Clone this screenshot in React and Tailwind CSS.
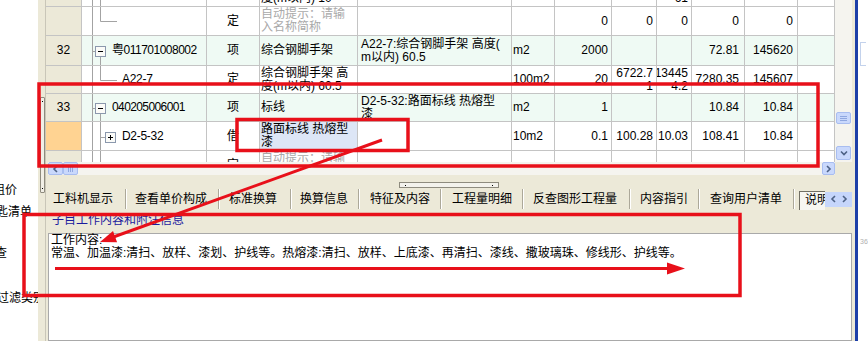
import React from 'react';

const GRID = 'grid grid-cols-[36px_125px_53px_98px_154px_43px_57px_45px_35px_53px_53px_37px]';

function C({ children, className = '' }) {
  return (
    <div className={`flex items-center overflow-hidden border-r border-b border-[#c4c4c4] ${className}`}>
      {children}
    </div>
  );
}

function Hdr({ children, className = 'bg-[#ece9d8]' }) {
  return <C className={`justify-center ${className}`}>{children}</C>;
}

function N({ children, className = 'pr-[4px]' }) {
  return (
    <C className={`justify-end text-right ${className}`}>
      <div>{children}</div>
    </C>
  );
}

function Tree({ w, h, d, box, plus }) {
  return (
    <svg width={w} height={h} className="shrink-0 self-start">
      <path d={d} stroke="#a3a3a3" fill="none" />
      {box && (
        <>
          <rect x={box[0] + 0.5} y={box[1] + 0.5} width="10" height="10" fill="#fbfbf8" stroke="#8b98ad" />
          <path d={`M${box[0] + 3} ${box[1] + 5.5}H${box[0] + 8}`} stroke="#000" />
          {plus && <path d={`M${box[0] + 5.5} ${box[1] + 3}V${box[1] + 8}`} stroke="#000" />}
        </>
      )}
    </svg>
  );
}

function XpBtn({ className = '', children }) {
  return (
    <div className={`flex items-center justify-center bg-[#c9d8fc] border border-[#a8bdf0] rounded-[2px] ${className}`}>
      {children}
    </div>
  );
}

function Chevron({ dir }) {
  const d = {
    left: 'M6 2L3 5L6 8',
    right: 'M3 2L6 5L3 8',
    down: 'M2 3.5L5 6.5L8 3.5',
  }[dir];
  return (
    <svg width="9" height="10" viewBox="0 0 9 10">
      <path d={d} stroke="#4d6185" strokeWidth="1.6" fill="none" />
    </svg>
  );
}

function Sep() {
  return (
    <div className="w-[2px] my-[1px] flex shrink-0">
      <div className="w-px bg-[#aca899]" />
      <div className="w-px bg-white" />
    </div>
  );
}

function Tab({ w, pl, children }) {
  return (
    <div className={`flex items-center shrink-0 whitespace-nowrap ${w} ${pl}`}>{children}</div>
  );
}

const Gray = ({ children }) => <div className="text-[#a9a9a9]">{children}</div>;

export default function App() {
  return (
    <div className="relative w-[868px] h-[341px] overflow-hidden bg-white flex font-['Liberation_Sans','Noto_Sans_CJK_SC',sans-serif] text-[12px] leading-[13px] text-black">
      {/* left panel, clipped labels */}
      <div className="w-[38px] shrink-0 overflow-hidden bg-white pt-[184px] whitespace-nowrap">
        <div className="-ml-[7px]">组价</div>
        <div className="mt-[9px] -ml-[4px]">匙清单</div>
        <div className="mt-[28px] -ml-[5px]">查</div>
        <div className="mt-[32px] -ml-[3px]">过滤类别</div>
      </div>

      {/* splitter */}
      <div className="w-[8px] shrink-0 bg-[#ece9d8] border-r border-[#c9c6b8] pt-[97px] pl-[2px]">
        <div className="w-[5px] h-[96px] border border-[#8e8b7e] rounded-[1px] bg-[#f1efe6] flex flex-col justify-between items-center py-[3px]">
          <div className="w-px h-px bg-black" />
          <div className="w-px h-px bg-black" />
        </div>
      </div>

      {/* main */}
      <div className="w-[806px] shrink-0 flex flex-col bg-[#ece9d8]">
        <div className="flex h-[162px]">
          <div className="w-[789px] h-[162px] bg-white overflow-hidden">
            {/* partial top row */}
            <div className="h-[7px] overflow-hidden">
              <div className={`${GRID} h-[29px] -mt-[22px]`}>
                <Hdr />
                <C><Tree w={40} h={29} d="M10.5 0V29M18.5 0V29" /></C>
                <C />
                <C className="pl-[1px]"><div>综合钢脚手架 高<br />度(m以内) 10</div></C>
                <C /><C /><C /><C />
                <N className="pr-[3px]">13445<br />61</N>
                <C /><C /><C />
              </div>
            </div>

            <div className={`${GRID} h-[29px]`}>
              <Hdr />
              <C><Tree w={40} h={29} d="M10.5 0V29M18.5 0V14.5H35" /></C>
              <C className="justify-center">定</C>
              <C className="pl-[1px]"><Gray>自动提示：请输<br />入名称简称</Gray></C>
              <C /><C />
              <N className="pr-[3px]">0</N>
              <N className="pr-[3px]">0</N>
              <N className="pr-[3px]">0</N>
              <N className="pr-[5px]">0</N>
              <N className="pr-[4px]">0</N>
              <C />
            </div>

            <div className={`${GRID} h-[30px] bg-[#effaf4]`}>
              <Hdr>32</Hdr>
              <C>
                <Tree w={30} h={30} d="M10.5 0V30M10.5 15.5H13M18.5 21V30" box={[13, 10]} />
                <span className="tracking-[-0.5px]">粤011701008002</span>
              </C>
              <C className="justify-center">项</C>
              <C className="pl-[1px]">综合钢脚手架</C>
              <C className="pl-[3px]"><div>A22-7:综合钢脚手架 高度(<br />m以内) 60.5</div></C>
              <C className="pl-[1px]">m2</C>
              <N className="pr-[3px]">2000</N>
              <C /><C />
              <N className="pr-[5px]">72.81</N>
              <N className="pr-[4px]">145620</N>
              <C />
            </div>

            <div className={`${GRID} h-[28px]`}>
              <Hdr />
              <C>
                <Tree w={40} h={28} d="M10.5 0V28M18.5 0V14.5H35" />
                <span className="tracking-[-0.3px]">A22-7</span>
              </C>
              <C className="justify-center">定</C>
              <C className="pl-[1px]"><div>综合钢脚手架 高<br />度(m以内) 60.5</div></C>
              <C />
              <C className="pl-[1px]">100m2</C>
              <N className="pr-[3px]">20</N>
              <N className="pr-[3px]">6722.7<br />1</N>
              <N className="pr-[3px]">13445<br />4.2</N>
              <N className="pr-[5px]">7280.35</N>
              <N className="pr-[4px]">145607</N>
              <C />
            </div>

            <div className={`${GRID} h-[28px] bg-[#effaf4]`}>
              <Hdr>33</Hdr>
              <C>
                <Tree w={30} h={28} d="M10.5 0V28M10.5 14.5H13M18.5 20V28" box={[13, 9]} />
                <span className="tracking-[-0.6px]">040205006001</span>
              </C>
              <C className="justify-center">项</C>
              <C className="pl-[1px]">标线</C>
              <C className="pl-[3px]"><div>D2-5-32:路面标线 热熔型<br />漆</div></C>
              <C className="pl-[1px]">m2</C>
              <N className="pr-[3px]">1</N>
              <C /><C />
              <N className="pr-[5px]">10.84</N>
              <N className="pr-[4px]">10.84</N>
              <C />
            </div>

            <div className={`${GRID} h-[29px]`}>
              <Hdr className="bg-[#ffd392]" />
              <C>
                <Tree w={40} h={29} d="M10.5 0V29M18.5 0V29M18.5 15.5H23" box={[23, 10]} plus />
                <span className="tracking-[-0.3px]">D2-5-32</span>
              </C>
              <C className="justify-center">借</C>
              <C className="pl-[1px] bg-[#dde6f6]"><div>路面标线 热熔型<br />漆</div></C>
              <C />
              <C className="pl-[1px]">10m2</C>
              <N className="pr-[3px]">0.1</N>
              <N className="pr-[3px]">100.28</N>
              <N className="pr-[3px]">10.03</N>
              <N className="pr-[5px]">108.41</N>
              <N className="pr-[4px]">10.84</N>
              <C />
            </div>

            {/* partial bottom row */}
            <div className="h-[11px] overflow-hidden">
              <div className={`${GRID} h-[29px]`}>
                <Hdr />
                <C><Tree w={40} h={29} d="M10.5 0V29M18.5 0V29" /></C>
                <C className="justify-center">定</C>
                <C className="pl-[1px]"><Gray>自动提示：请输<br />入名称简称</Gray></C>
                <C /><C /><C /><C /><C /><C /><C /><C />
              </div>
            </div>
          </div>

          {/* vertical scrollbar */}
          <div className="w-[17px] h-[162px] bg-[#f5f4ef] flex flex-col px-[1px]">
            <div className="h-[112px]" />
            <XpBtn className="h-[12px] flex-col gap-[1px]">
              <div className="w-[7px] h-px bg-[#8fa7e0]" />
              <div className="w-[7px] h-px bg-[#8fa7e0]" />
              <div className="w-[7px] h-px bg-[#8fa7e0]" />
            </XpBtn>
            <div className="h-[22px]" />
            <XpBtn className="h-[14px]"><Chevron dir="down" /></XpBtn>
          </div>
        </div>

        {/* horizontal scrollbar */}
        <div className="h-[13px] flex bg-[#f5f4ef]">
          <div className="w-[2px] bg-[#ece9d8]" />
          <XpBtn className="w-[15px]"><Chevron dir="left" /></XpBtn>
          <XpBtn className="w-[15px] gap-[1px]">
            <div className="w-px h-[6px] bg-[#8fa7e0]" />
            <div className="w-px h-[6px] bg-[#8fa7e0]" />
            <div className="w-px h-[6px] bg-[#8fa7e0]" />
          </XpBtn>
          <div className="flex-1" />
          <XpBtn className="w-[13px]"><Chevron dir="right" /></XpBtn>
          <div className="w-[17px] bg-[#ece9d8]" />
        </div>

        {/* splitter grip */}
        <div className="h-[13px] flex justify-center">
          <div className="mt-[7px] w-[100px] h-[6px] border border-[#8e8b7e] bg-[#f3f2ec] flex items-center justify-between px-[5px]">
            <div className="w-px h-px bg-black" />
            <div className="w-px h-px bg-black" />
          </div>
        </div>

        {/* tabs */}
        <div className="h-[22px] flex items-stretch pl-[2px]">
          <Tab w="w-[77px]" pl="pl-[5px]">工料机显示</Tab>
          <Sep />
          <Tab w="w-[91px]" pl="pl-[8px]">查看单价构成</Tab>
          <Sep />
          <Tab w="w-[70px]" pl="pl-[9px]">标准换算</Tab>
          <Sep />
          <Tab w="w-[66px]" pl="pl-[8px]">换算信息</Tab>
          <Sep />
          <Tab w="w-[80px]" pl="pl-[10px]">特征及内容</Tab>
          <Sep />
          <Tab w="w-[80px]" pl="pl-[10px]">工程量明细</Tab>
          <Sep />
          <Tab w="w-[105px]" pl="pl-[9px]">反查图形工程量</Tab>
          <Sep />
          <Tab w="w-[67px]" pl="pl-[9px]">内容指引</Tab>
          <Sep />
          <Tab w="w-[93px]" pl="pl-[10px]">查询用户清单</Tab>
          <Sep />
          <div className="w-[4px] shrink-0" />
          <div className="w-[26px] shrink-0 mt-[3px] border-l border-t border-[#716f64] bg-[#f7f6f1] overflow-hidden whitespace-nowrap pl-[5px] pt-[2px]">
            说明
          </div>
          <div className="w-[27px] shrink-0 self-center h-[15px] bg-[#c6d6fb] flex items-center justify-center gap-[2px]">
            <Chevron dir="left" />
            <Chevron dir="right" />
          </div>
        </div>

        {/* title */}
        <div className="h-[23px] pt-[4px] pl-[6px] text-[#1c1c9e] whitespace-nowrap">子目工作内容和附注信息</div>

        {/* text box */}
        <div className="flex-1 ml-[2px] w-[804px] bg-white border border-[#a9a9a9] pl-[2px] whitespace-nowrap">
          <div>工作内容:</div>
          <div>常温、加温漆:清扫、放样、漆划、护线等。热熔漆:清扫、放样、上底漆、再清扫、漆线、撒玻璃珠、修线形、护线等。</div>
        </div>
      </div>

      <div className="w-[3px] shrink-0 bg-[#ece9d8]" />
      <div className="w-[3px] shrink-0 bg-[#1d3fa8]" />
      <div className="w-[10px] shrink-0 bg-white flex flex-col pt-[42px] pl-[2px]">
        <div className="w-[6px] h-[24px] border-l border-t border-b border-[#c3d2ec]" />
        <div className="mt-[172px] text-[7px] leading-[8px] text-[#b0b0b0]">36</div>
      </div>

      {/* red annotations */}
      <svg className="absolute top-0 left-0 pointer-events-none" width="868" height="341">
        <g stroke="#e8101a" fill="none" strokeWidth="3.5">
          <rect x="39" y="84" width="779" height="82" />
          <rect x="237" y="119.5" width="171" height="31" />
          <rect x="24" y="214.5" width="716" height="81" />
        </g>
        <line x1="382" y1="140" x2="112" y2="237.5" stroke="#e8101a" strokeWidth="3" />
        <polygon points="100,242 117.1,242.2 113,230.9" fill="#e8101a" />
        <line x1="55" y1="268.5" x2="670" y2="268.5" stroke="#e8101a" strokeWidth="3" />
        <polygon points="685,268.5 667,262.5 667,274.5" fill="#e8101a" />
      </svg>
    </div>
  );
}
